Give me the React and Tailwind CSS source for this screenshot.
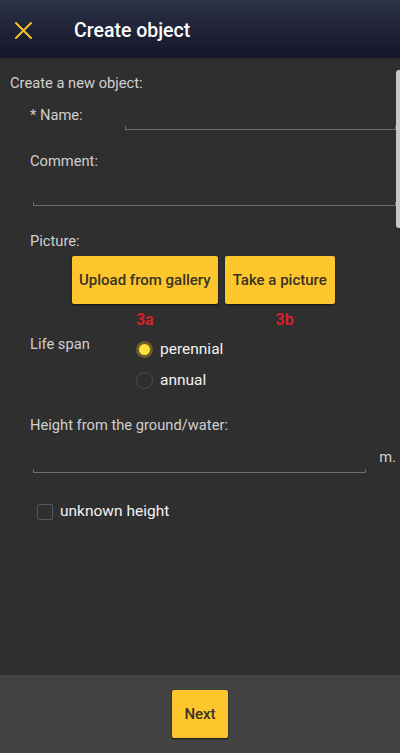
import React, { useState } from 'react';

const font = { fontFamily: 'Roboto, "Noto Sans", sans-serif' };

function Underline({ className = '' }) {
    // holo-style edit line with little ticks at both ends
    return <div className={`h-[4px] border-x border-b border-[#6e6e6e] ${className}`} />;
}

function Radio({ checked, label, onClick }) {
    return (
        <div className="flex items-center h-[31px] cursor-pointer" onClick={onClick}>
            {checked ? (
                <span className="w-[17px] h-[17px] rounded-full bg-[#6b5c2a] flex items-center justify-center">
                    <span className="w-[11px] h-[11px] rounded-full bg-[#ffe23d]" />
                </span>
            ) : (
                <span className="w-[17px] h-[17px] rounded-full border-[1.5px] border-[#4e4e4e]" />
            )}
            <span className="ml-[7px] text-[15.5px] text-[#f2f2f2]">{label}</span>
        </div>
    );
}

export default function App() {
    const [lifeSpan, setLifeSpan] = useState('perennial');
    const [unknown, setUnknown] = useState(false);

    return (
        <div style={font} className="relative w-[400px] h-[753px] flex flex-col bg-[#2f2f2f] overflow-hidden">
            {/* Header */}
            <div className="h-[58px] flex items-center bg-gradient-to-b from-[#2d3247] to-[#141629] shrink-0">
                <svg width="19" height="19" viewBox="0 0 19 19" className="ml-[14px] mt-[2px]">
                    <path d="M2 2 L17 17 M17 2 L2 17" stroke="#f4c12e" strokeWidth="2" strokeLinecap="round" />
                </svg>
                <span className="ml-[41px] mt-[3px] text-[19.5px] font-medium text-white">Create object</span>
            </div>

            {/* Form */}
            <div className="flex-1 pr-[4px]">
                <p className="mt-[15px] ml-[10px] leading-5 text-[14.7px] text-[#cfcfcf]">Create a new object:</p>

                <div className="flex h-[37px]">
                    <span className="ml-[30px] w-[95px] pt-[12px] leading-5 text-[14.7px] text-[#cfcfcf]">* Name:</span>
                    <div className="flex-1 flex flex-col justify-end">
                        <Underline />
                    </div>
                </div>

                <p className="mt-[21px] ml-[30px] leading-5 text-[14.7px] text-[#cfcfcf]">Comment:</p>
                <div className="ml-[33px] h-[35px] flex flex-col justify-end">
                    <Underline />
                </div>

                <p className="mt-[25px] ml-[30px] leading-5 text-[14.7px] text-[#cfcfcf]">Picture:</p>
                <div className="mt-[5px] ml-[72px] flex gap-[7px]">
                    <div className="flex flex-col items-center">
                        <button className="h-[48px] px-[7px] rounded-[2px] bg-[#fdc62c] text-[15px] font-medium text-[#3a3222] shadow-[0_1px_2px_rgba(0,0,0,0.6)]">
                            Upload from gallery
                        </button>
                        <span className="mt-[6px] text-[16px] leading-5 font-bold text-[#d3232a]">3a</span>
                    </div>
                    <div className="flex flex-col items-center">
                        <button className="h-[48px] px-[8px] rounded-[2px] bg-[#fdc62c] text-[15px] font-medium text-[#3a3222] shadow-[0_1px_2px_rgba(0,0,0,0.6)]">
                            Take a picture
                        </button>
                        <span className="mt-[6px] ml-[10px] text-[16px] leading-5 font-bold text-[#d3232a]">3b</span>
                    </div>
                </div>

                <div className="flex mt-[4px]">
                    <span className="ml-[30px] w-[106px] leading-5 text-[14.7px] text-[#cfcfcf]">Life span</span>
                    <div className="flex flex-col">
                        <Radio checked={lifeSpan === 'perennial'} label="perennial" onClick={() => setLifeSpan('perennial')} />
                        <Radio checked={lifeSpan === 'annual'} label="annual" onClick={() => setLifeSpan('annual')} />
                    </div>
                </div>

                <p className="mt-[19px] ml-[30px] leading-5 text-[14.7px] text-[#cfcfcf]">Height from the ground/water:</p>
                <div className="flex items-end h-[38px]">
                    <div className="ml-[33px] w-[337px]">
                        <Underline />
                    </div>
                    <span className="ml-[13px] mb-[6px] leading-5 text-[14.7px] text-[#cfcfcf]">m.</span>
                </div>

                <div className="mt-[27px] ml-[37px] flex items-center cursor-pointer" onClick={() => setUnknown(!unknown)}>
                    <span className={`w-[16px] h-[16px] rounded-[2px] border-[1.5px] ${unknown ? 'bg-[#fdc62c] border-[#fdc62c]' : 'border-[#555555]'}`} />
                    <span className="ml-[7px] text-[15.5px] text-[#f2f2f2]">unknown height</span>
                </div>
            </div>

            {/* Bottom bar */}
            <div className="h-[78px] shrink-0 bg-[#434343] flex justify-center pt-[15px]">
                <button className="w-[56px] h-[48px] rounded-[2px] bg-[#fdc62c] text-[15px] font-medium text-[#3a3222] shadow-[0_1px_2px_rgba(0,0,0,0.7)]">
                    Next
                </button>
            </div>

            {/* Scrollbar overlay */}
            <div className="absolute right-0 top-[70px] w-[4px] h-[158px] rounded-l-[3px] bg-[#c9c9c9]" />
        </div>
    );
}
